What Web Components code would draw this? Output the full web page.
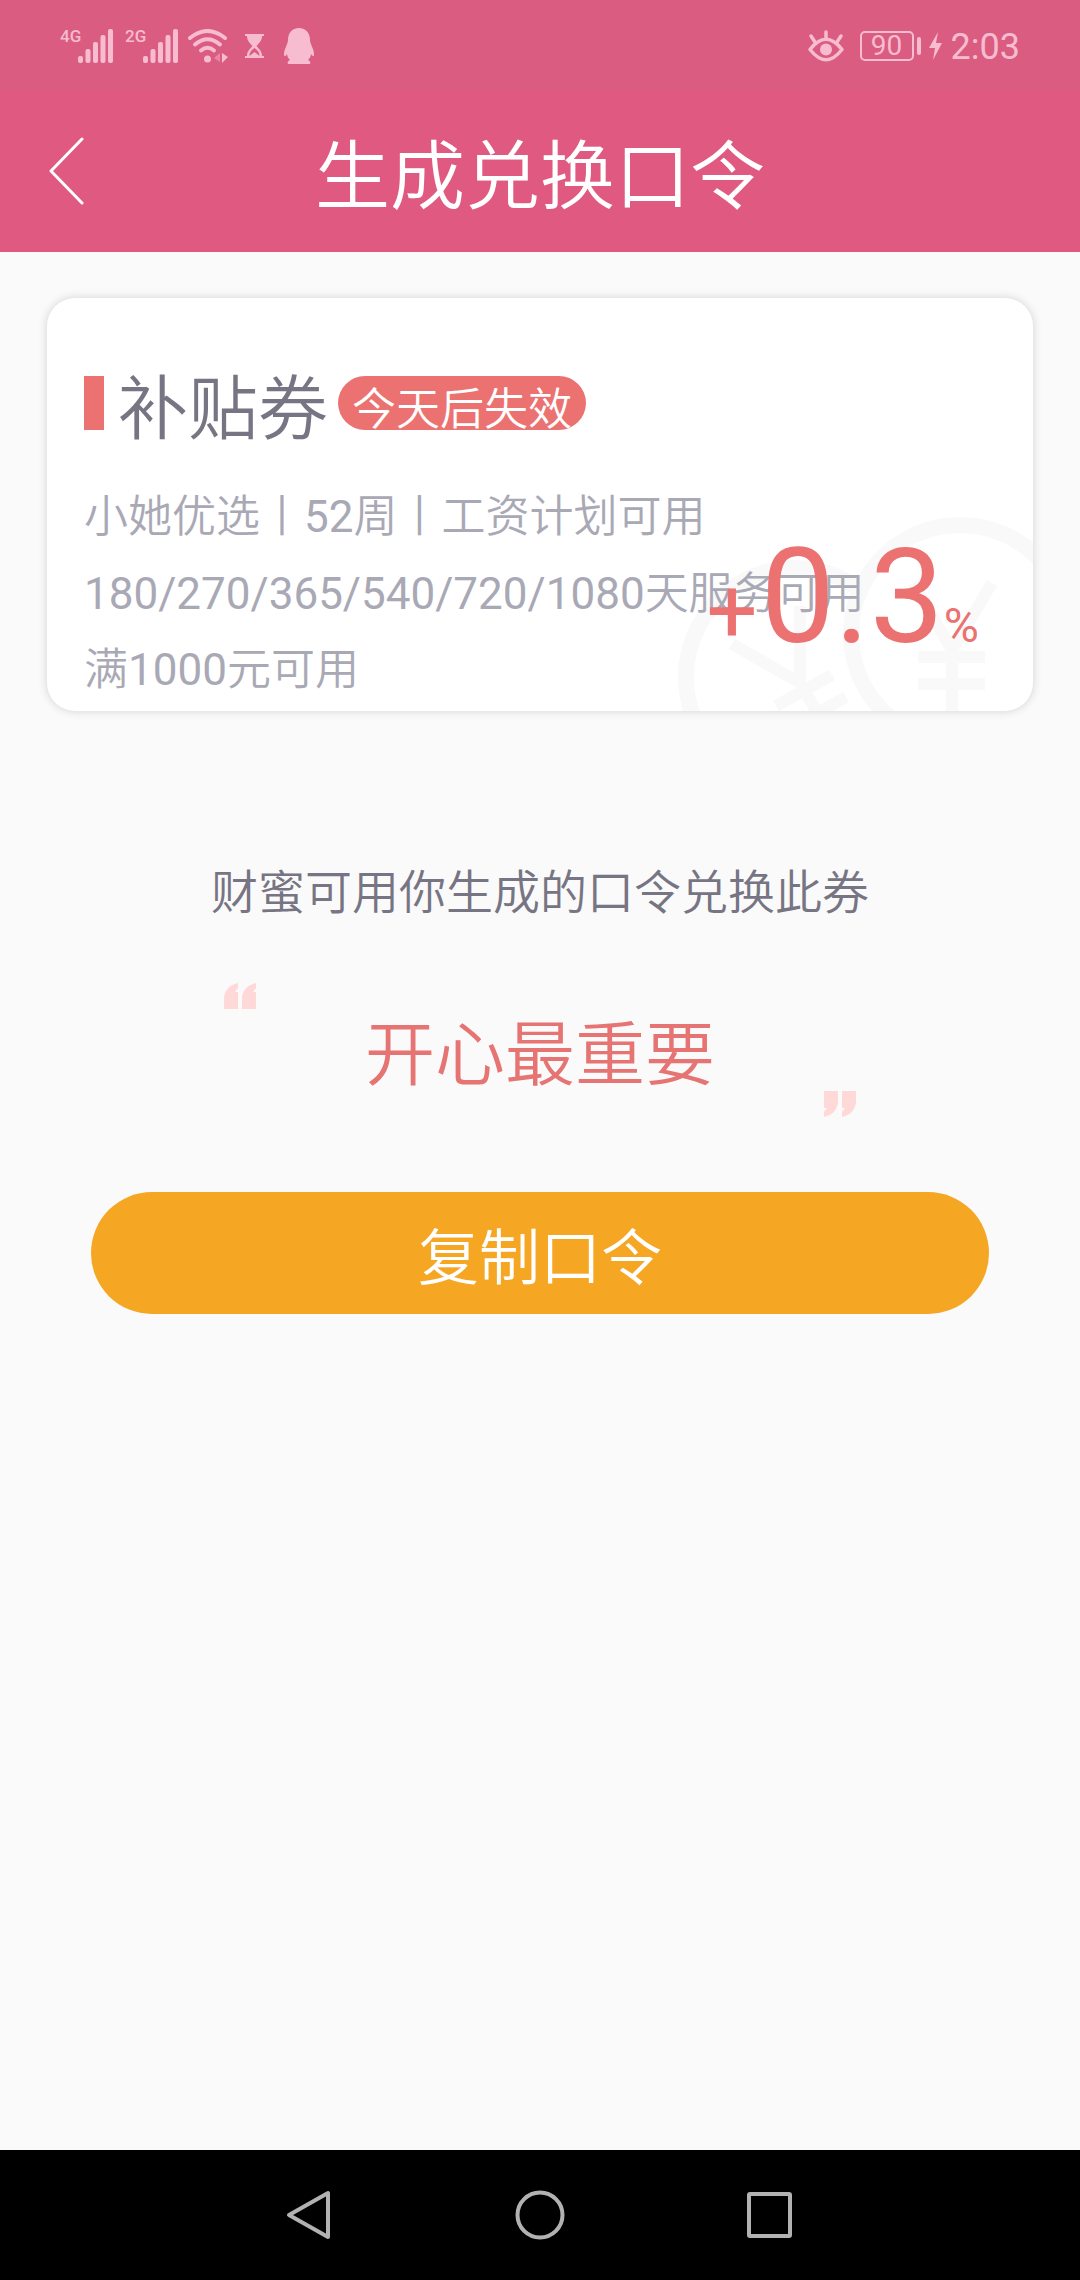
<!DOCTYPE html>
<html lang="zh-CN">
<head>
<meta charset="utf-8">
<meta name="viewport" content="width=device-width">
<title>生成兑换口令</title>
<style>
html, body { margin: 0; height: 100%; }
body { background: #fafafa; font-family: Roboto, "Noto Sans CJK SC", sans-serif; }
</style>
</head>
<body>
<exchange-page></exchange-page>

<template id="status-bar">
<style>
:host { display: flex; justify-content: space-between; align-items: center; height: 90px; padding: 2px 60px 0; box-sizing: border-box; background: #da5c81; color: #f7bccf; }
div { display: flex; align-items: center; }
svg { display: block; fill: currentColor; }
.net { font-size: 17px; line-height: 16px; width: 18px; font-weight: 500; align-self: flex-start; }
.sig { align-items: center; height: 36px; margin-right: 12px; }
.wifi { margin: 0 17px 0 -2px; }
.glass { margin-right: 20px; }
.battery { box-sizing: border-box; width: 54px; height: 30px; border: 2px solid; border-radius: 5px; justify-content: center; font-size: 28px; line-height: 26px; margin-left: 16px; }
.tip { width: 4px; height: 18px; border-radius: 2px; background: currentColor; margin: 0 8px 0 3px; }
time { font-size: 36px; line-height: 40px; margin-left: 9px; padding-top: 2px; }
</style>
<div>
  <div class="sig"><span class="net">4G</span>
    <svg width="35" height="34" viewBox="0 0 35 34"><rect y="27" width="5" height="7" rx="2"/><rect x="7.500" y="20" width="5" height="14" rx="2"/><rect x="15" y="13" width="5" height="21" rx="2"/><rect x="22.500" y="6" width="5" height="28" rx="2"/><rect x="30" width="5" height="34" rx="2"/></svg></div>
  <div class="sig"><span class="net">2G</span>
    <svg width="35" height="34" viewBox="0 0 35 34"><rect y="27" width="5" height="7" rx="2"/><rect x="7.500" y="20" width="5" height="14" rx="2"/><rect x="15" y="13" width="5" height="21" rx="2"/><rect x="22.500" y="6" width="5" height="28" rx="2"/><rect x="30" width="5" height="34" rx="2"/></svg></div>
  <svg class="wifi" width="40" height="34" viewBox="0 0 40 34"><g fill="none" stroke="currentColor" stroke-width="4" stroke-linecap="round"><path d="M2 9Q19.500-5 37 9"/><path d="M7 15.500Q19.500 5 32 15.500"/><path d="M13 21.500Q19.500 16 26 21.500"/></g><circle cx="19.500" cy="30" r="3.500"/><path d="M32 24v9l-6-4z" opacity=".45"/><path d="M34 24l6 4-6 6z"/></svg>
  <svg class="glass" width="19" height="24" viewBox="0 0 19 24"><path d="M0 0h19v2h-2c0 5-3 7-5.500 10 2.500 3 5.500 5 5.500 10h2v2H0v-2h2c0-5 3-7 5.500-10C5 9 2 7 2 2H0z"/><path d="M4.500 22c0-4 2.500-6 5-8 2.500 2 5 4 5 8l-5-4z" fill="#da5c81"/></svg>
  <svg width="30" height="36" viewBox="0 0 30 36"><path d="M15 0C8 0 4 5 4 12c0 4-4 9-4 14 0 3 1 3 3 0 0 3 2 5 3 6-2 1-3 2-2 4h22c1-2 0-3-2-4 1-1 3-3 3-6 2 3 3 3 3 0 0-5-4-10-4-14C26 5 22 0 15 0z"/></svg>
</div>
<div>
  <svg width="36" height="32" viewBox="0 0 36 32"><g fill="none" stroke="currentColor" stroke-width="3.500" stroke-linecap="round"><path d="M2 19.500Q18-1 34 19.500Q18 40 2 19.500z" stroke-linejoin="round"/><path d="M18 2v6M3 6l4 6M33 6l-4 6"/></g><circle cx="18" cy="19.500" r="6"/></svg>
  <div class="battery">90</div><div class="tip"></div>
  <svg width="13" height="28" viewBox="0 0 13 28"><path d="M9 0L0 16h6L4 28 13 11H7z"/></svg>
  <time>2:03</time>
</div>
</template>

<template id="nav-header">
<style>
:host { display: grid; grid-template-columns: 84px 1fr 84px; align-items: center; height: 162px; background: #df5981; color: #fff; }
button { border: 0; background: none; padding: 0 0 0 48px; height: 100%; color: inherit; }
svg { display: block; }
h1 { margin: 0; text-align: center; font-size: 75px; font-weight: 350; line-height: 90px; padding-top: 12px; }
</style>
<button aria-label="返回"><svg width="36" height="68" viewBox="0 0 36 68" fill="none" stroke="currentColor" stroke-width="3" stroke-linecap="round" stroke-linejoin="round"><path d="M34 2L3 34l31 32"/></svg></button>
<h1><slot></slot></h1>
</template>

<template id="coupon-card">
<style>
:host { display: block; position: relative; overflow: hidden; margin: 46px 47px 0; padding: 78px 37px 3px; border-radius: 28px; background: #fff; box-shadow: 0 0 10px rgba(0,0,0,.16); }
.head { display: flex; align-items: flex-start; margin-bottom: 35px; position: relative; }
.bar { width: 20px; height: 54px; background: #eb7271; margin-right: 14px; }
h2 { margin: 0 10px 0 0; font-size: 70px; line-height: 68px; font-weight: 350; color: #777583; }
.tag { box-sizing: border-box; height: 54px; padding: 10px 14px 0; border-radius: 27px; background: #eb7271; color: #fff; font-size: 44px; line-height: 48px; font-weight: 350; overflow: hidden; }
.info { position: relative; font-size: 44px; line-height: 76px; font-weight: 350; color: #a9a9b6; white-space: nowrap; }
.info p { margin: 0; }
.info p:first-child { margin-bottom: 1px; }
.rate { position: absolute; right: 54px; bottom: 5px; display: flex; align-items: baseline; color: #eb7271; line-height: 160px; }
.plus { font-size: 90px; margin-right: 3px; }
.num { font-size: 132px; }
.pct { font-size: 48px; }
.coins { position: absolute; right: 0; bottom: 0; }
</style>
<svg class="coins" width="360" height="200" viewBox="673 511 360 200" fill="none" stroke="#f9f9f9" stroke-width="12" aria-hidden="true">
  <defs><mask id="m" maskUnits="userSpaceOnUse" x="673" y="511" width="360" height="200"><rect x="673" y="511" width="360" height="200" fill="#fff" stroke="none"/><circle cx="960" cy="634" r="117" fill="#000" stroke="none"/></mask></defs>
  <g mask="url(#m)"><circle cx="795" cy="677" r="109" stroke-width="16"/><path d="M732 644L800 683V606M800 683l28 48M776 706l56-31M790 729l56-32" /></g>
  <circle cx="960" cy="634" r="109" stroke-width="16"/><path d="M913 583l39 67 40-67M952 645v70M918 657h67M918 684h67"/>
</svg>
<div class="head"><span class="bar"></span><h2><slot name="title"></slot></h2><span class="tag"><slot name="tag"></slot></span></div>
<div class="info"><p><slot name="plan"></slot></p><p><slot name="term"></slot></p><p><slot name="limit"></slot></p></div>
<div class="rate"><span class="plus">+</span><span class="num"><slot name="rate"></slot></span><span class="pct">%</span></div>
</template>

<template id="pass-phrase">
<style>
:host { display: block; margin-top: 156px; text-align: center; }
.hint { margin: 0 0 64px; font-size: 47px; line-height: 52px; font-weight: 350; color: #777583; }
.quote { display: flex; flex-direction: column; margin: 0 224px; }
svg { display: block; fill: #ffd8d8; }
.close { align-self: flex-end; transform: rotate(180deg); }
.word { margin: 0; padding: 12px 0 0; font-size: 70px; line-height: 70px; font-weight: 350; color: #e57473; }
</style>
<p class="hint"><slot name="hint"></slot></p>
<div class="quote">
  <svg width="32" height="26" viewBox="0 0 32 26"><path d="M14 0C5 2 0 8 0 16v10h14V9h-3l3-4zM32 0c-9 2-14 8-14 16v10h14V9h-3l3-4z"/></svg>
  <p class="word"><slot></slot></p>
  <svg class="close" width="32" height="26" viewBox="0 0 32 26"><path d="M14 0C5 2 0 8 0 16v10h14V9h-3l3-4zM32 0c-9 2-14 8-14 16v10h14V9h-3l3-4z"/></svg>
</div>
</template>

<template id="primary-button">
<style>
:host { display: block; margin: 75px 91px 0; }
button { display: block; width: 100%; height: 122px; border: 0; border-radius: 61px; padding: 12px 0 0; background: #f5a623; color: #fff; font: 350 61px/80px Roboto, "Noto Sans CJK SC", sans-serif; }
</style>
<button><slot></slot></button>
</template>

<template id="system-nav">
<style>
:host { display: flex; justify-content: center; gap: 180px; align-items: center; height: 130px; background: #000; }
button { display: flex; border: 0; padding: 0; background: none; width: 50px; height: 50px; color: #b2b2b2; }
svg { display: block; fill: none; stroke: currentColor; stroke-width: 4; stroke-linejoin: round; }
</style>
<button aria-label="返回"><svg width="50" height="50" viewBox="0 0 50 50"><path d="M43 3v44L4 25z"/></svg></button>
<button aria-label="主页"><svg width="50" height="50" viewBox="0 0 50 50"><circle cx="25" cy="25" r="22.500"/></svg></button>
<button aria-label="最近任务"><svg width="50" height="50" viewBox="0 0 50 50"><rect x="4" y="4" width="41" height="42" rx="1"/></svg></button>
</template>

<template id="exchange-page">
<style>
:host { display: flex; flex-direction: column; min-height: 100vh; }
main { flex: 1; }
.figure { font-weight: 400; }
</style>
<status-bar></status-bar>
<nav-header>生成兑换口令</nav-header>
<main>
  <coupon-card>
    <span slot="title">补贴券</span><span slot="tag">今天后失效</span>
    <span slot="plan">小她优选丨<span class="figure">52</span>周丨工资计划可用</span>
    <span slot="term"><span class="figure">180/270/365/540/720/1080</span>天服务可用</span>
    <span slot="limit">满<span class="figure">1000</span>元可用</span>
    <span slot="rate">0.3</span>
  </coupon-card>
  <pass-phrase><span slot="hint">财蜜可用你生成的口令兑换此券</span>开心最重要</pass-phrase>
  <primary-button>复制口令</primary-button>
</main>
<system-nav></system-nav>
</template>

<script>
class TemplateElement extends HTMLElement {
  constructor() {
    super();
    this.attachShadow({ mode: "open" }).append(document.getElementById(this.localName).content.cloneNode(true));
  }
}
for (const name of ["status-bar", "nav-header", "coupon-card", "pass-phrase", "primary-button", "system-nav", "exchange-page"]) {
  customElements.define(name, class extends TemplateElement {});
}
</script>
</body>
</html>
